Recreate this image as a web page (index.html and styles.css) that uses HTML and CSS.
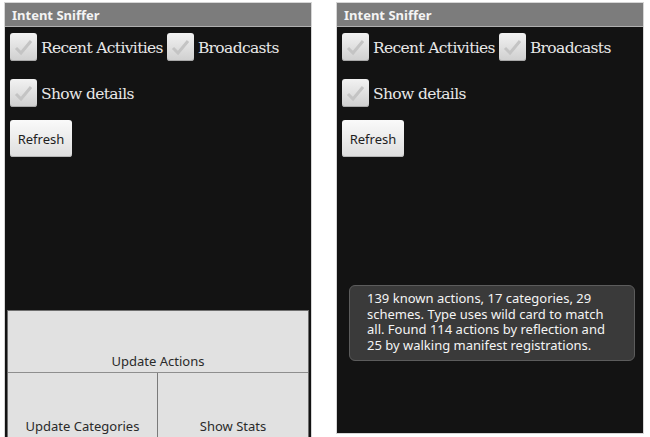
FILE: index.html
```html
<!DOCTYPE html>
<html>
<head>
<meta charset="utf-8">
<link rel="stylesheet" href="styles.css">
</head>
<body>
<div class="screens">
  <section class="phone phone-main">
    <header class="titlebar">Intent Sniffer</header>
    <div class="content">
      <div class="row">
        <label class="check"><span class="box"><svg viewBox="0 0 27 28"><path d="M6 15 L11 20 L21 8" fill="none" stroke="#c4c4c4" stroke-width="3"/></svg></span><span class="lbl">Recent Activities</span></label>
        <label class="check"><span class="box"><svg viewBox="0 0 27 28"><path d="M6 15 L11 20 L21 8" fill="none" stroke="#c4c4c4" stroke-width="3"/></svg></span><span class="lbl">Broadcasts</span></label>
      </div>
      <div class="row">
        <label class="check"><span class="box"><svg viewBox="0 0 27 28"><path d="M6 15 L11 20 L21 8" fill="none" stroke="#c4c4c4" stroke-width="3"/></svg></span><span class="lbl">Show details</span></label>
      </div>
      <button class="refresh">Refresh</button>
    </div>
    <div class="actions">
      <div class="act act-full">Update Actions</div>
      <div class="act-pair">
        <div class="act">Update Categories</div>
        <div class="act">Show Stats</div>
      </div>
    </div>
  </section>

  <section class="phone phone-toast">
    <header class="titlebar">Intent Sniffer</header>
    <div class="content">
      <div class="row">
        <label class="check"><span class="box"><svg viewBox="0 0 27 28"><path d="M6 15 L11 20 L21 8" fill="none" stroke="#c4c4c4" stroke-width="3"/></svg></span><span class="lbl">Recent Activities</span></label>
        <label class="check"><span class="box"><svg viewBox="0 0 27 28"><path d="M6 15 L11 20 L21 8" fill="none" stroke="#c4c4c4" stroke-width="3"/></svg></span><span class="lbl">Broadcasts</span></label>
      </div>
      <div class="row">
        <label class="check"><span class="box"><svg viewBox="0 0 27 28"><path d="M6 15 L11 20 L21 8" fill="none" stroke="#c4c4c4" stroke-width="3"/></svg></span><span class="lbl">Show details</span></label>
      </div>
      <button class="refresh">Refresh</button>
    </div>
    <div class="toast">139 known actions, 17 categories, 29 schemes. Type uses wild card to match all. Found 114 actions by reflection and 25 by walking manifest registrations.</div>
  </section>
</div>
</body>
</html>
```

FILE: styles.css
```css
html, body {
  margin: 0;
  padding: 0;
  background: #ffffff;
  overflow: hidden;
}
body {
  width: 650px;
  height: 437px;
}
.screens {
  display: flex;
  gap: 26px;
  padding: 3px 0 0 5px;
  align-items: flex-start;
}
.phone {
  position: relative;
  width: 306px;
  background: #131313;
  display: flex;
  flex-direction: column;
  box-shadow: 0 0 0 1px #d6d6d6;
}
.phone-main {
  height: 434px;
}
.phone-toast {
  height: 430px;
}
.titlebar {
  height: 23px;
  background: #7c7c7c;
  border-bottom: 1px solid #b0b0b0;
  color: #f4f4f4;
  font-family: "Noto Sans", "Open Sans", sans-serif;
  font-weight: bold;
  font-size: 13px;
  line-height: 24px;
  padding-left: 7px;
}
.content {
  display: flex;
  flex-direction: column;
  align-items: flex-start;
  padding: 6px 0 0 5px;
  flex: 1;
}
.row {
  display: flex;
  align-items: center;
  gap: 4px;
  margin-bottom: 18px;
}
.row + .row {
  margin-bottom: 13px;
}
.check {
  display: flex;
  align-items: center;
  gap: 4px;
}
.box {
  width: 27px;
  height: 28px;
  border-radius: 3px;
  background: linear-gradient(#f2f2f2, #cfcfcf);
  box-shadow: inset 0 -1px 0 #a8a8a8;
  display: block;
}
.box svg {
  display: block;
  width: 27px;
  height: 28px;
}
.lbl {
  font-family: "DejaVu Serif", serif;
  font-size: 15.5px;
  letter-spacing: -0.65px;
  color: #e8e8e8;
  padding-top: 2px;
}
.refresh {
  width: 62px;
  height: 37px;
  border: none;
  border-radius: 3px;
  background: linear-gradient(#fafafa, #dedede);
  box-shadow: inset 0 -1px 0 #b5b5b5;
  font-family: "Noto Sans", "Open Sans", sans-serif;
  font-size: 13px;
  color: #1e1e1e;
  padding: 0;
}
.actions {
  margin: 0 2px;
  background: #e1e1e1;
  border: 1px solid #6e6e6e;
  border-bottom: none;
  display: flex;
  flex-direction: column;
}
.act {
  height: 64px;
  display: flex;
  align-items: flex-end;
  justify-content: center;
  padding-bottom: 2px;
  font-family: "Noto Sans", "Open Sans", sans-serif;
  font-size: 13px;
  color: #2a2a2a;
  box-sizing: border-box;
  line-height: 18px;
}
.act-full {
  border-bottom: 1px solid #8e8e8e;
  height: 62px;
}
.act-pair {
  display: grid;
  grid-template-columns: 149px 1fr;
}
.act-pair .act + .act {
  border-left: 1px solid #7a7a7a;
}
.toast {
  position: absolute;
  left: 12px;
  top: 282px;
  width: 286px;
  height: 76px;
  box-sizing: border-box;
  padding: 5px 24px 0 17px;
  background: #3a3a3a;
  border: 1px solid #5c5c5c;
  border-radius: 6px;
  color: #f4f4f4;
  font-family: "Noto Sans", "Open Sans", sans-serif;
  font-size: 13px;
  line-height: 15.5px;
}
```
